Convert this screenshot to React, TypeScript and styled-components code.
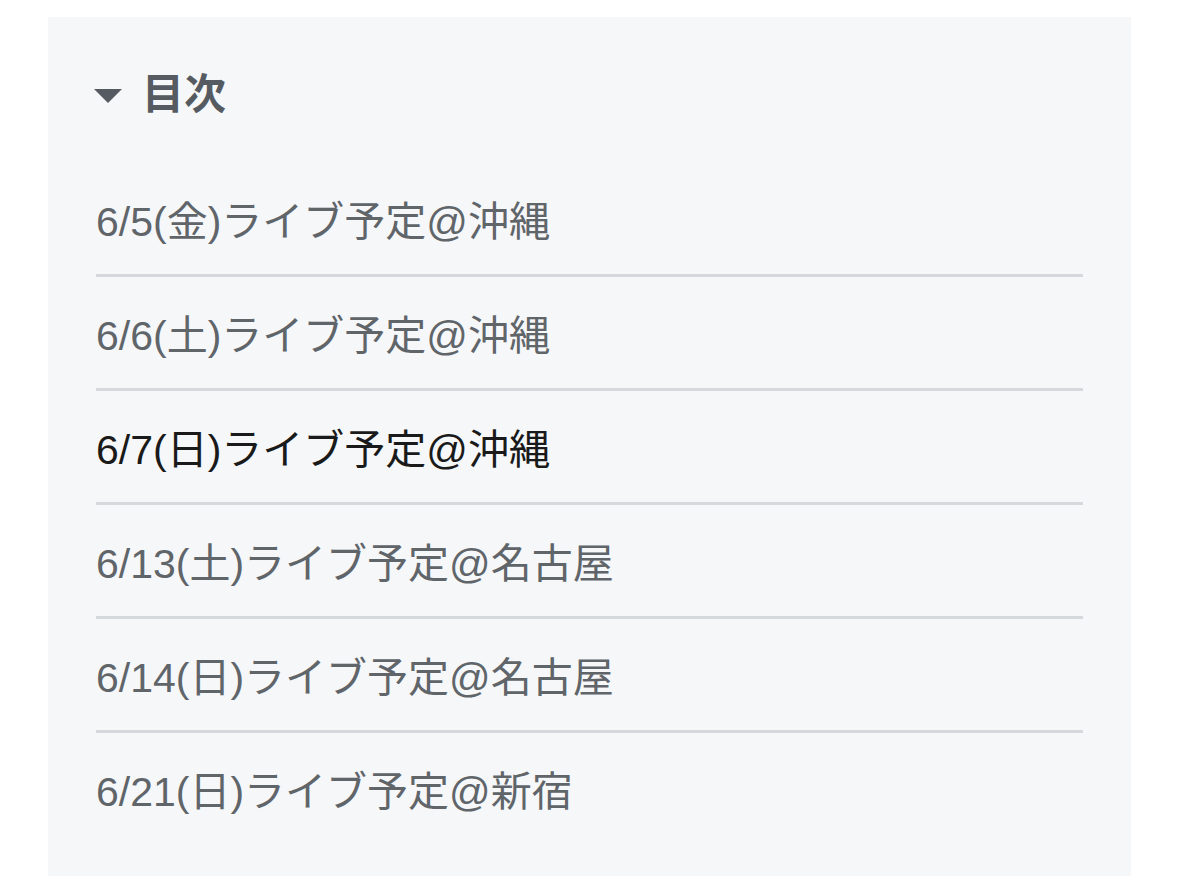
import React from "react";
import styled, { createGlobalStyle } from "styled-components";

const Global = createGlobalStyle`
  html, body { margin: 0; padding: 0; background: #ffffff; }
  body { font-family: "Liberation Sans", "Noto Sans CJK JP", sans-serif; }
`;

const Page = styled.div`
  padding: 17px 48px 0 48px;
  min-height: 876px;
  box-sizing: border-box;
  display: flex;
`;

const Panel = styled.nav`
  flex: 1;
  background: #f6f7f9;
  padding: 58px 48px 40px 48px;
  box-sizing: border-box;
  min-height: 859px;
`;

const Heading = styled.div`
  display: flex;
  align-items: center;
  gap: 20px;
  height: 40px;
  font-size: 42px;
  line-height: 40px;
  font-weight: 700;
  color: #555b60;
  margin-bottom: 48px;
`;

const Caret = styled.svg`
  width: 28px;
  height: 14px;
  flex: none;
  margin-left: -2px;
  margin-top: 2px;
`;

const List = styled.ul`
  list-style: none;
  margin: 0;
  padding: 0;
`;

const Item = styled.li<{ $last?: boolean }>`
  padding: 39px 0 32px 0;
  border-bottom: ${(p) => (p.$last ? "none" : "3px solid #d5d8dc")};
`;

const Link = styled.a<{ $active?: boolean }>`
  display: block;
  font-size: 41px;
  line-height: 40px;
  color: ${(p) => (p.$active ? "#1a1a1a" : "#60656a")};
  text-decoration: none;
  white-space: nowrap;
`;

const items = [
  { label: "6/5(金)ライブ予定@沖縄" },
  { label: "6/6(土)ライブ予定@沖縄" },
  { label: "6/7(日)ライブ予定@沖縄", active: true },
  { label: "6/13(土)ライブ予定@名古屋" },
  { label: "6/14(日)ライブ予定@名古屋" },
  { label: "6/21(日)ライブ予定@新宿" },
];

export default function App() {
  return (
    <>
      <Global />
      <Page>
        <Panel>
          <Heading>
            <Caret viewBox="0 0 28 14">
              <polygon points="0,0 28,0 14,14" fill="#555b60" />
            </Caret>
            目次
          </Heading>
          <List>
            {items.map((it, i) => (
              <Item key={it.label} $last={i === items.length - 1}>
                <Link href="#" $active={it.active}>
                  {it.label}
                </Link>
              </Item>
            ))}
          </List>
        </Panel>
      </Page>
    </>
  );
}
